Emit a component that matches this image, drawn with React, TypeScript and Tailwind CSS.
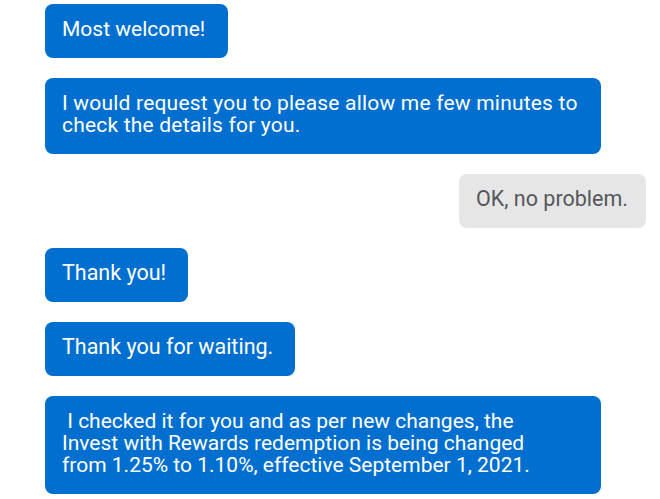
import React from 'react'

type Msg = { lines: string[]; mine?: boolean; w: string; size?: string }

const messages: Msg[] = [
  { lines: ['Most welcome!'], w: 'w-[183px]', size: 'text-[21px]' },
  {
    lines: ['I would request you to please allow me few minutes to', 'check the details for you.'],
    w: 'w-[556px]',
    size: 'text-[21px] tracking-[0.2px]',
  },
  { lines: ['OK, no problem.'], mine: true, w: 'w-[187px]' },
  { lines: ['Thank you!'], w: 'w-[143px]' },
  { lines: ['Thank you for waiting.'], w: 'w-[250px]' },
  {
    lines: [
      '\u00a0I checked it for you and as per new changes, the',
      'Invest with Rewards redemption is being changed',
      'from 1.25% to 1.10%, effective September 1, 2021.',
    ],
    w: 'w-[556px]',
    size: 'text-[21px]',
  },
]

export default function App() {
  return (
    <main className="min-h-[499px] w-[660px] bg-white font-['Roboto',sans-serif]">
      <div className="flex flex-col gap-5 pl-[45px] pr-[14px] pt-1">
        {messages.map((m, i) => (
          <div key={i} className={m.mine ? 'flex justify-end' : 'flex justify-start'}>
            <div
              className={
                (m.mine ? 'bg-[#e6e6e6] text-[#55575b] ' : 'bg-[#016fcf] text-white ') +
                m.w +
                ' ' +
                (m.size ?? 'text-[21.5px]') +
                ' rounded-lg px-[17px] pt-[14px] pb-[18px] leading-[22px]'
              }
            >
              {m.lines.map((l, j) => (
                <span key={j} className="block whitespace-nowrap">
                  {l}
                </span>
              ))}
            </div>
          </div>
        ))}
      </div>
    </main>
  )
}
